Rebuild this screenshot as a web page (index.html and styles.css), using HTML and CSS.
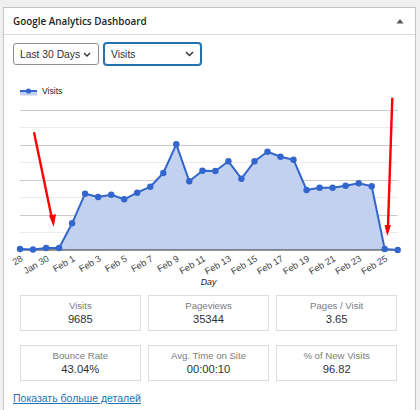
FILE: index.html
```html
<!DOCTYPE html>
<html>
<head>
<meta charset="utf-8">
<link rel="stylesheet" href="styles.css">
</head>
<body>
<div class="panel">
  <div class="hdr">
    <h2 class="title">Google Analytics Dashboard</h2>
    <svg class="toggle" width="8" height="6" viewBox="0 0 8 6"><path d="M0.5 5.5 L4 1 L7.5 5.5 Z" fill="#50575e"/></svg>
  </div>
  <div class="controls">
    <div class="sel sel-range"><span>Last 30 Days</span><svg class="chev" width="8" height="5" viewBox="0 0 8 5"><path d="M1 1 L4 4 L7 1" fill="none" stroke="#2c3338" stroke-width="1.4"/></svg></div>
    <div class="sel sel-metric"><span>Visits</span><svg class="chev" width="9" height="6" viewBox="0 0 9 6"><path d="M1 1 L4.5 4.5 L8 1" fill="none" stroke="#2c3338" stroke-width="1.4"/></svg></div>
  </div>
  <svg class="chart" width="411" height="225" viewBox="4 65 411 225">
    <defs><clipPath id="lc"><rect x="12" y="65" width="400" height="225"/></clipPath></defs>
    <rect x="20" y="91.5" width="17" height="4" fill="#c2d1f0"/>
    <line x1="20" y1="91" x2="37" y2="91" stroke="#3366cc" stroke-width="2"/>
    <circle cx="28.5" cy="91" r="2.6" fill="#3366cc"/>
    <text class="lg" x="42" y="94">Visits</text>
    <g class="minor"><line x1="20" y1="127.5" x2="397.7" y2="127.5"/><line x1="20" y1="162.5" x2="397.7" y2="162.5"/><line x1="20" y1="197.5" x2="397.7" y2="197.5"/><line x1="20" y1="232.5" x2="397.7" y2="232.5"/></g>
    <g class="major"><line x1="20" y1="110.5" x2="397.7" y2="110.5"/><line x1="20" y1="145.5" x2="397.7" y2="145.5"/><line x1="20" y1="180.5" x2="397.7" y2="180.5"/><line x1="20" y1="215.5" x2="397.7" y2="215.5"/></g>
    <polygon class="area" points="20,249 33,249.5 46.1,248 59.1,248 72.1,223.3 85.1,193.7 98.2,197 111.2,194.7 124.2,199.3 137.2,192.7 150.3,186.7 163.3,173 176.3,144.3 189.3,181.3 202.4,170.7 215.4,171 228.4,161.3 241.4,178.7 254.5,161.3 267.5,151.7 280.5,156.7 293.5,159.7 306.6,190 319.6,187.7 332.6,187.7 345.6,185.7 358.7,183.3 371.7,186.3 384.7,249 397.7,250 397.7,250 20,250"/>
    <line class="base" x1="20" y1="250" x2="397.7" y2="250"/>
    <polyline class="ln" points="20,249 33,249.5 46.1,248 59.1,248 72.1,223.3 85.1,193.7 98.2,197 111.2,194.7 124.2,199.3 137.2,192.7 150.3,186.7 163.3,173 176.3,144.3 189.3,181.3 202.4,170.7 215.4,171 228.4,161.3 241.4,178.7 254.5,161.3 267.5,151.7 280.5,156.7 293.5,159.7 306.6,190 319.6,187.7 332.6,187.7 345.6,185.7 358.7,183.3 371.7,186.3 384.7,249 397.7,250"/>
    <g class="dots">
      <circle cx="20" cy="249" r="3.2"/><circle cx="33" cy="249.5" r="3.2"/><circle cx="46.1" cy="248" r="3.2"/><circle cx="59.1" cy="248" r="3.2"/><circle cx="72.1" cy="223.3" r="3.2"/><circle cx="85.1" cy="193.7" r="3.2"/><circle cx="98.2" cy="197" r="3.2"/><circle cx="111.2" cy="194.7" r="3.2"/><circle cx="124.2" cy="199.3" r="3.2"/><circle cx="137.2" cy="192.7" r="3.2"/><circle cx="150.3" cy="186.7" r="3.2"/><circle cx="163.3" cy="173" r="3.2"/><circle cx="176.3" cy="144.3" r="3.2"/><circle cx="189.3" cy="181.3" r="3.2"/><circle cx="202.4" cy="170.7" r="3.2"/><circle cx="215.4" cy="171" r="3.2"/><circle cx="228.4" cy="161.3" r="3.2"/><circle cx="241.4" cy="178.7" r="3.2"/><circle cx="254.5" cy="161.3" r="3.2"/><circle cx="267.5" cy="151.7" r="3.2"/><circle cx="280.5" cy="156.7" r="3.2"/><circle cx="293.5" cy="159.7" r="3.2"/><circle cx="306.6" cy="190" r="3.2"/><circle cx="319.6" cy="187.7" r="3.2"/><circle cx="332.6" cy="187.7" r="3.2"/><circle cx="345.6" cy="185.7" r="3.2"/><circle cx="358.7" cy="183.3" r="3.2"/><circle cx="371.7" cy="186.3" r="3.2"/><circle cx="384.7" cy="249" r="3.2"/><circle cx="397.7" cy="250" r="3.2"/>
    </g>
    <g class="ax" clip-path="url(#lc)">
      <text x="23.5" y="260.5" transform="rotate(-30 23.5 260.5)">Jan 28</text>
      <text x="49.6" y="260.5" transform="rotate(-30 49.6 260.5)">Jan 30</text>
      <text x="75.6" y="260.5" transform="rotate(-30 75.6 260.5)">Feb 1</text>
      <text x="101.7" y="260.5" transform="rotate(-30 101.7 260.5)">Feb 3</text>
      <text x="127.7" y="260.5" transform="rotate(-30 127.7 260.5)">Feb 5</text>
      <text x="153.8" y="260.5" transform="rotate(-30 153.8 260.5)">Feb 7</text>
      <text x="179.8" y="260.5" transform="rotate(-30 179.8 260.5)">Feb 9</text>
      <text x="205.9" y="260.5" transform="rotate(-30 205.9 260.5)">Feb 11</text>
      <text x="231.9" y="260.5" transform="rotate(-30 231.9 260.5)">Feb 13</text>
      <text x="258" y="260.5" transform="rotate(-30 258 260.5)">Feb 15</text>
      <text x="284" y="260.5" transform="rotate(-30 284 260.5)">Feb 17</text>
      <text x="310.1" y="260.5" transform="rotate(-30 310.1 260.5)">Feb 19</text>
      <text x="336.1" y="260.5" transform="rotate(-30 336.1 260.5)">Feb 21</text>
      <text x="362.2" y="260.5" transform="rotate(-30 362.2 260.5)">Feb 23</text>
      <text x="388.2" y="260.5" transform="rotate(-30 388.2 260.5)">Feb 25</text>
    </g>
    <text class="atitle" x="208.5" y="285">Day</text>
    <g class="arrow">
      <line x1="34" y1="132.3" x2="51.6" y2="217"/>
      <polygon points="49,215.5 56,214.3 53.7,227"/>
      <line x1="392.3" y1="97.7" x2="388" y2="226"/>
      <polygon points="384.5,225 391,225.2 387.3,236"/>
    </g>
  </svg>
  <div class="stats">
    <div class="stat"><div class="lbl">Visits</div><div class="val">9685</div></div>
    <div class="stat"><div class="lbl">Pageviews</div><div class="val">35344</div></div>
    <div class="stat"><div class="lbl">Pages / Visit</div><div class="val">3.65</div></div>
    <div class="stat"><div class="lbl">Bounce Rate</div><div class="val">43.04%</div></div>
    <div class="stat"><div class="lbl">Avg. Time on Site</div><div class="val">00:00:10</div></div>
    <div class="stat"><div class="lbl">% of New Visits</div><div class="val">96.82</div></div>
  </div>
  <div class="more"><a href="#">Показать больше деталей</a></div>
</div>
</body>
</html>
```
FILE: styles.css
```css
html, body {
  margin: 0;
  padding: 0;
  background: #f0f0f1;
  font-family: "Liberation Sans", Arial, sans-serif;
  color: #2c3338;
}
.panel {
  margin: 7px 0 0 3px;
  width: 413px;
  min-height: 420px;
  box-sizing: border-box;
  border: 1px solid #c3c4c7;
  background: #fff;
}
.hdr {
  display: flex;
  align-items: center;
  justify-content: space-between;
  height: 26px;
  padding: 0 11px 0 9px;
  border-bottom: 1px solid #dcdcde;
}
.title {
  margin: 0;
  font-family: "Open Sans", "Liberation Sans", sans-serif;
  font-weight: 600;
  font-size: 9.9px;
  line-height: 26px;
  color: #1d2327;
}
.toggle { display: block; }
.controls {
  display: flex;
  gap: 5px;
  padding: 8px 9px 0;
}
.sel {
  display: flex;
  align-items: center;
  justify-content: space-between;
  box-sizing: border-box;
  height: 22px;
  border: 1px solid #8c8f94;
  border-radius: 3px;
  font-size: 10.3px;
  color: #2c3338;
  background: #fff;
}
.sel-range {
  width: 86px;
  padding: 0 7px 0 6px;
}
.sel-metric {
  width: 97px;
  padding: 0 6px 0 6px;
  border-color: #2271b1;
  box-shadow: 0 0 0 1px #2271b1;
}
.chev { display: block; }
.chart {
  display: block;
  font-family: "Liberation Sans", Arial, sans-serif;
}
.lg { font-size: 8.6px; fill: #222; }
.minor line { stroke: #ebebeb; stroke-width: 1; }
.major line { stroke: #cccccc; stroke-width: 1; }
.base { stroke: #333; stroke-width: 1.2; }
.area { fill: #c2d1f0; }
.ln { fill: none; stroke: #3366cc; stroke-width: 2; stroke-linejoin: round; }
.dots circle { fill: #3366cc; }
.ax text { font-size: 9.2px; fill: #444; text-anchor: end; }
.atitle { font-size: 8.8px; font-style: italic; fill: #222; text-anchor: middle; }
.arrow line { stroke: #f00; stroke-width: 2.4; }
.arrow polygon { fill: #f00; }
.stats {
  display: grid;
  grid-template-columns: repeat(3, 1fr);
  column-gap: 7.5px;
  row-gap: 14px;
  margin: 5px 18px 0 16px;
}
.stat {
  border: 1px solid #dcdcde;
  padding: 3px 0;
  text-align: center;
}
.lbl {
  font-size: 9.6px;
  line-height: 13px;
  color: #787c82;
}
.val {
  font-size: 11.2px;
  line-height: 15px;
  color: #2c3338;
}
.more {
  margin-top: 10px;
  padding-left: 9px;
  font-size: 10.5px;
  line-height: 14px;
}
.more a {
  color: #2271b1;
  text-decoration: underline;
}
```
